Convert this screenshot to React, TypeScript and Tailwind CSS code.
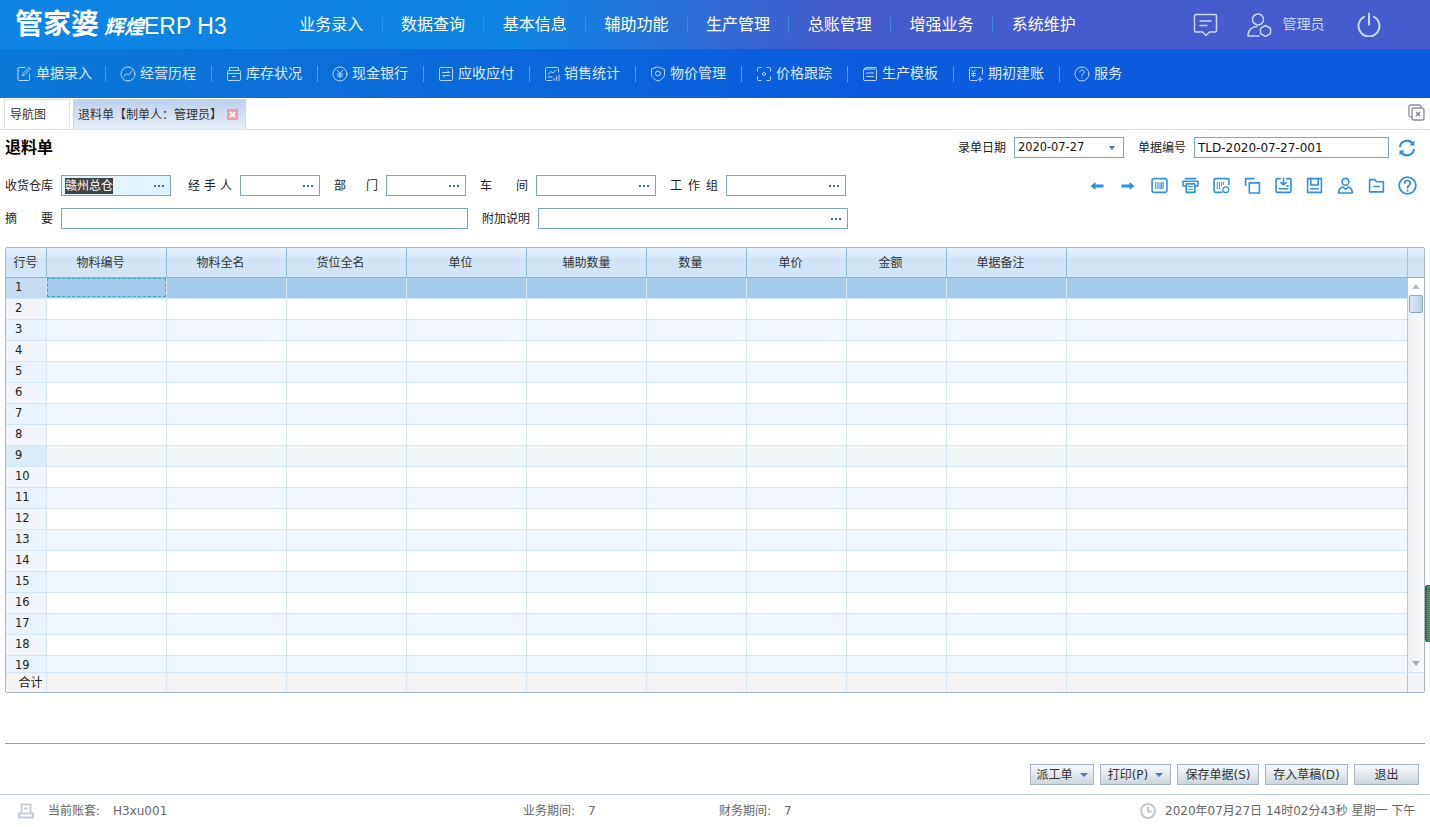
import type { ReactNode } from 'react';

const topMenus = ['业务录入', '数据查询', '基本信息', '辅助功能', '生产管理', '总账管理', '增强业务', '系统维护'];

function Ico({ size = 16, sw = 1, children }: { size?: number; sw?: number; children: ReactNode }) {
  return (
    <svg width={size} height={size} viewBox="0 0 16 16" fill="none" stroke="currentColor" strokeWidth={sw} strokeLinecap="round" strokeLinejoin="round" className="shrink-0">
      {children}
    </svg>
  );
}

const subMenus: { label: string; icon: ReactNode }[] = [
  { label: '单据录入', icon: <><path d="M9 1.5H3a1 1 0 0 0-1 1v11a1 1 0 0 0 1 1h9.5a1 1 0 0 0 1-1V8" /><path d="M6.5 9.5l.5-2 6-6 1.5 1.5-6 6z" /></> },
  { label: '经营历程', icon: <><circle cx="8" cy="8" r="7" /><path d="M4 10.5l2.5-3 2 1.5 3.5-4" /></> },
  { label: '库存状况', icon: <><rect x="1.5" y="4.5" width="13" height="10" rx="1" /><path d="M1.5 7.5h13M3.5 4.5v-3h9v3M6.5 10.5h3" /></> },
  { label: '现金银行', icon: <><circle cx="8" cy="8" r="7" /><path d="M5.5 4.5L8 7.5l2.500-3M8 7.500V12M5.500 8h5M5.500 10h5" /></> },
  { label: '应收应付', icon: <><rect x="1.500" y="1.500" width="13" height="13" rx="1" /><path d="M4.500 6.500h7L9.500 4.800M11.500 9.500h-7l2 1.700" /></> },
  { label: '销售统计', icon: <><path d="M14.500 6V2.500a1 1 0 0 0-1-1h-11a1 1 0 0 0-1 1v11a1 1 0 0 0 1 1h5" /><path d="M4 8.500l3-3 2 1.500 3-3M4 11h4M10 14.500v-2M12.500 14.500v-4M15 14.500V9" /></> },
  { label: '物价管理', icon: <><path d="M8 1l6.500 2.300V8c0 3.500-3 5.800-6.500 7-3.500-1.200-6.500-3.500-6.500-7V3.300z" /><circle cx="8" cy="7.500" r="2.500" /></> },
  { label: '价格跟踪', icon: <><path d="M5 1.500H2.500a1 1 0 0 0-1 1V5M11 1.500h2.500a1 1 0 0 1 1 1V5M5 14.500H2.500a1 1 0 0 1-1-1V11M11 14.500h2.500a1 1 0 0 0 1-1V11" /><circle cx="8" cy="8" r="1.500" /></> },
  { label: '生产模板', icon: <><rect x="1.500" y="3" width="13" height="11.500" rx="1" /><path d="M3.500 3V1.500h11M4.500 7h7M4.500 10.500h7" /></> },
  { label: '期初建账', icon: <><path d="M14.500 8V2.500a1 1 0 0 0-1-1h-11a1 1 0 0 0-1 1v11a1 1 0 0 0 1 1H9" /><path d="M3.500 4l2 2.500 2-2.500M5.500 6.500V11M3.500 7.500h4M3.500 9.500h4M12 11v4.500M10 13.200h4.500" /></> },
  { label: '服务', icon: <><circle cx="8" cy="8" r="7" /><path d="M5.800 6a2.200 2.200 0 1 1 3.400 1.900c-.8.500-1.200 1-1.200 1.900M8 11.800v.2" /></> },
];

const toolIcons: ReactNode[] = [
  <path key="a" d="M1.500 8L6.500 4v2.500h8v3h-8V12z" fill="currentColor" stroke="none" />,
  <path key="b" d="M14.500 8L9.500 4v2.500h-8v3h8V12z" fill="currentColor" stroke="none" />,
  <g key="c"><rect x="1" y="1.500" width="14" height="13" rx="2" /><path d="M4.500 5v6M6.500 5v6M8.500 5v6M10 5v6M11.500 5v6" strokeWidth="1" /></g>,
  <g key="d"><path d="M3 1.500h10M1 4h14v4.500h-3M4 8.500H1V4" /><path d="M4 6.500h8v8H4z" /><path d="M6 9h4M6 11.500h4" strokeWidth="1" /></g>,
  <g key="e"><path d="M15 7V3a1.500 1.500 0 0 0-1.500-1.500h-11A1.500 1.500 0 0 0 1 3v10a1.500 1.500 0 0 0 1.500 1.500H8" /><path d="M4 5v6M6 5v6M8 5v3M10 5v2" strokeWidth="1" /><circle cx="12" cy="12" r="2.800" strokeWidth="1.200" /></g>,
  <g key="f"><path d="M9.500 1.500h-8V8" /><rect x="5" y="5.500" width="9.500" height="9.500" /></g>,
  <g key="g"><path d="M5 1.500H2a1 1 0 0 0-1 1v11a1 1 0 0 0 1 1h12a1 1 0 0 0 1-1v-11a1 1 0 0 0-1-1h-3" /><path d="M8 1v6M5.500 5L8 7.500 10.500 5M4 11h8M11 8.500h1.500" /></g>,
  <g key="h"><path d="M1.500 1.500h13v13h-13z" /><path d="M4.500 1.500v6h7v-6M4.500 11h7" /></g>,
  <g key="i"><circle cx="8" cy="4.500" r="3.200" /><path d="M1.500 15c.300-3.500 2-5 4-5.500L8 11.500l2.500-2c2 .5 3.700 2 4 5.500z" /></g>,
  <g key="j"><path d="M1.500 14V2.500h5l1.500 2h6.500V14zM5.500 9h5" /></g>,
  <g key="k"><circle cx="8" cy="8" r="7" /><path d="M5.700 6a2.300 2.300 0 1 1 3.500 2c-.8.500-1.200 1-1.200 2M8 12.300v.2" /></g>,
];

const columns = [
  { title: '物料编号', width: 'w-[120px]', shift: 'pr-[12px]' },
  { title: '物料全名', width: 'w-[120px]', shift: 'pr-[12px]' },
  { title: '货位全名', width: 'w-[120px]', shift: 'pr-[12px]' },
  { title: '单位', width: 'w-[120px]', shift: 'pr-[12px]' },
  { title: '辅助数量', width: 'w-[120px]', shift: '' },
  { title: '数量', width: 'w-[100px]', shift: 'pr-[12px]' },
  { title: '单价', width: 'w-[100px]', shift: 'pr-[12px]' },
  { title: '金额', width: 'w-[100px]', shift: 'pr-[12px]' },
  { title: '单据备注', width: 'w-[120px]', shift: 'pr-[12px]' },
];

function Dots() {
  return (
    <span className="ml-auto mr-[6px] flex gap-[2px]">
      <i className="h-[2px] w-[2px] bg-[#3a6db0]" />
      <i className="h-[2px] w-[2px] bg-[#3a6db0]" />
      <i className="h-[2px] w-[2px] bg-[#3a6db0]" />
    </span>
  );
}

function Field({ width, dots = true, children, className = '' }: { width: string; dots?: boolean; children?: ReactNode; className?: string }) {
  return (
    <div className={`flex h-[21px] shrink-0 items-center border border-[#7ba6bf] ${width} ${className}`}>
      {children}
      {dots && <Dots />}
    </div>
  );
}

// labels are stretched char by char, like 部   门
function Label({ text, width, className = '' }: { text: string; width: string; className?: string }) {
  return (
    <span className={`flex shrink-0 justify-between text-[12px] text-[#222] ${width} ${className}`}>
      {text.split('').map((ch, i) => (
        <span key={i}>{ch}</span>
      ))}
    </span>
  );
}

function Btn({ width, arrow, children }: { width: string; arrow?: boolean; children: ReactNode }) {
  return (
    <button className={`flex h-[21px] items-center justify-center gap-[7px] border border-[#a8b4c6] bg-[linear-gradient(180deg,#f8fafb,#ccd6dc)] text-[12px] text-[#333] ${width}`}>
      {children}
      {arrow && <i className="mt-[1px] h-0 w-0 border-x-[4px] border-t-[4px] border-x-transparent border-t-[#4a78b8]" />}
    </button>
  );
}

function Row({ n }: { n: number }) {
  const selected = n === 1;
  const odd = n % 2 === 1;
  const numBg = selected ? 'bg-[#c4dcf0]' : n === 9 ? 'bg-[#dcecf6]' : odd ? 'bg-[#ebf3fa]' : 'bg-[#f2f6fa]';
  const rowBg = selected ? 'bg-[#a3caea]' : n === 9 ? 'bg-[#f0f7f6]' : odd ? 'bg-[#f0f7fe]' : 'bg-white';
  const line = selected ? 'border-[#d5e7f6]' : 'border-[#d2e6f8]';
  return (
    <div className={`flex h-[21px] shrink-0 ${rowBg}`}>
      <div className={`flex w-[41px] shrink-0 items-center border-r border-b border-[#d2e6f8] pl-[9px] text-[11.5px] text-[#222] ${numBg}`}>{n}</div>
      {columns.map((c, i) => (
        <div key={c.title} className={`shrink-0 border-r border-b ${line} ${c.width}`}>
          {selected && i === 0 && <div className="h-[19px] w-[119px] border border-dashed border-[#3fa6c8]" />}
        </div>
      ))}
      <div className={`flex-1 border-b ${line}`} />
    </div>
  );
}

export default function App() {
  return (
    <div className="relative flex h-[827px] w-[1430px] flex-col overflow-hidden bg-white font-['DejaVu_Sans','Noto_Sans_CJK_SC',sans-serif]">
      {/* top menu */}
      <header className="flex h-[49px] shrink-0 items-center bg-[linear-gradient(90deg,#0d84e4_36%,#445cce_58%)] text-white">
        <div className="flex w-[281px] shrink-0 items-center pl-[15px]">
          <span className="text-[28px] leading-none font-bold">管家婆</span>
          <span className="mt-[4px] ml-[5px] text-[20px] leading-none font-bold italic">辉煌</span>
          <span className="mt-[3px] font-['Liberation_Sans'] text-[23px] leading-none">ERP H3</span>
        </div>
        <nav className="flex shrink-0">
          {topMenus.map((m, i) => (
            <a key={m} className={`flex h-[16px] w-[101.7px] items-center justify-center text-[16px] ${i < 7 ? 'border-r border-[#3d94e8]/80' : ''}`}>
              {m}
            </a>
          ))}
        </nav>
        <div className="ml-[98px] flex items-center text-[#c8d8f6]">
          <svg width="25" height="24" viewBox="0 0 25 24" fill="none" stroke="currentColor" strokeWidth="1.500" strokeLinejoin="round" strokeLinecap="round">
            <path d="M3 1.500h19a1.500 1.500 0 0 1 1.500 1.500v14.500a1.500 1.500 0 0 1-1.500 1.500h-5.500l-3.500 3.500-3.500-3.500H3a1.500 1.500 0 0 1-1.500-1.500V3A1.500 1.500 0 0 1 3 1.500z" />
            <path d="M7 8h11M7 12.500h7" />
          </svg>
          <svg className="ml-[29px]" width="25" height="24" viewBox="0 0 25 24" fill="none" stroke="currentColor" strokeWidth="1.500" strokeLinejoin="round" strokeLinecap="round">
            <circle cx="11" cy="6.500" r="5.500" />
            <path d="M1 23c0-6 4-9.500 9-9.500M1 23h11" />
            <path d="M18.500 12.500l5 2.800v5.400l-5 2.800-5-2.800v-5.400z" />
          </svg>
          <span className="ml-[11px] w-[42px] text-[14px] whitespace-nowrap">管理员</span>
          <svg className="ml-[32px]" width="24" height="25" viewBox="0 0 24 25" fill="none" stroke="currentColor" strokeWidth="2" strokeLinecap="round">
            <path d="M12 1.500v11" />
            <path d="M7 4.800a10.500 10.500 0 1 0 10 0" />
          </svg>
        </div>
      </header>

      {/* quick bar */}
      <div className="flex h-[49px] shrink-0 items-center bg-[linear-gradient(90deg,#0a7ad8,#0c5bdc_60%)] text-[14px] text-[#dce9fb]">
        {subMenus.map((s, i) => (
          <div key={s.label} className={`flex h-[16px] w-[106px] shrink-0 items-center gap-[4px] whitespace-nowrap ${i === 0 ? 'pl-[16px]' : 'pl-[14px]'} ${i < 10 ? 'border-r border-[#4f9be8]' : ''}`}>
            <span className="text-[#b9d4f6]">
              <Ico>{s.icon}</Ico>
            </span>
            {s.label}
          </div>
        ))}
      </div>

      {/* tabs */}
      <div className="flex h-[32px] shrink-0 items-end border-b border-[#e3e3e3] pl-[4px] text-[12px]">
        <div className="flex h-[30px] w-[66px] items-center border border-b-0 border-[#e0e0e0] pl-[5px] text-[#333]">导航图</div>
        <div className="ml-[3px] flex h-[30px] w-[173px] items-center border border-b-0 border-[#ced8e6] bg-[linear-gradient(180deg,#bcd0ec,#e8eef7)] pl-[4px] text-[#333]">
          <span className="whitespace-nowrap">退料单【制单人：管理员】</span>
          <span className="ml-[5px] flex h-[11px] w-[11px] items-center justify-center rounded-[1px] bg-[#ee9ea6]">
            <svg width="7" height="7" viewBox="0 0 7 7" stroke="#fff" strokeWidth="2"><path d="M1 1l5 5M6 1L1 6" /></svg>
          </span>
        </div>
        <svg className="mb-[8px] ml-auto mr-[5px] text-[#8a8f96]" width="17" height="17" viewBox="0 0 17 17" fill="none" stroke="currentColor" strokeWidth="1.300">
          <rect x="1" y="1" width="12" height="12" rx="2" />
          <rect x="4" y="4" width="12" height="12" rx="2" fill="#fff" />
          <path d="M8 8l4 4M12 8l-4 4" strokeWidth="1.600" />
        </svg>
      </div>

      {/* date and number */}
      <div className="flex shrink-0 items-center pt-[7px] pr-[14px] pl-[5px]">
        <h1 className="text-[16px] leading-[21px] font-bold text-black">退料单</h1>
        <Label text="录单日期" width="w-[48px]" className="ml-auto" />
        <Field width="w-[110px]" dots={false} className="ml-[8px]">
          <span className="pl-[3px] text-[11.400px] text-[#111]">2020-07-27</span>
          <i className="mr-[8px] ml-auto h-0 w-0 border-x-[3.500px] border-t-[4px] border-x-transparent border-t-[#3f78c0]" />
        </Field>
        <Label text="单据编号" width="w-[48px]" className="ml-[14px]" />
        <Field width="w-[195px]" dots={false} className="ml-[8px]">
          <span className="pl-[3px] text-[12px] text-[#111]">TLD-2020-07-27-001</span>
        </Field>
        <svg className="ml-[9px] text-[#2f93dc]" width="18" height="18" viewBox="0 0 18 18" fill="none" stroke="currentColor" strokeWidth="2.200">
          <path d="M2 8a7 7 0 0 1 12.500-3.500" />
          <path d="M16 10a7 7 0 0 1-12.500 3.500" />
          <path d="M16.500 1.500v5h-5z" fill="currentColor" stroke="none" />
          <path d="M1.500 16.500v-5h5z" fill="currentColor" stroke="none" />
        </svg>
      </div>

      {/* form row 1 */}
      <div className="mt-[17px] flex shrink-0 items-center pl-[5px]">
        <Label text="收货仓库" width="w-[48px]" />
        <Field width="w-[110px]" className="ml-[8px] bg-[#e0f5ff]">
          <span className="ml-[3px] bg-[#444] text-[12px] leading-[16px] text-white">赣州总仓</span>
        </Field>
        <Label text="经手人" width="w-[44px]" className="ml-[17px]" />
        <Field width="w-[80px]" className="ml-[8px]" />
        <Label text="部门" width="w-[44px]" className="ml-[14px]" />
        <Field width="w-[80px]" className="ml-[8px]" />
        <Label text="车间" width="w-[48px]" className="ml-[14px]" />
        <Field width="w-[120px]" className="ml-[8px]" />
        <Label text="工作组" width="w-[48px]" className="ml-[14px]" />
        <Field width="w-[120px]" className="ml-[8px]" />
        <div className="mr-[7.500px] ml-auto flex text-[#2f8fe0]">
          {toolIcons.map((icon, i) => (
            <span key={i} className="flex h-[18px] w-[31px] items-center justify-center">
              <Ico size={i < 2 ? 16 : i === 10 ? 19 : 17} sw={1.500}>{icon}</Ico>
            </span>
          ))}
        </div>
      </div>

      {/* form row 2 */}
      <div className="mt-[12px] flex shrink-0 items-center pl-[5px]">
        <Label text="摘要" width="w-[48px]" />
        <Field width="w-[407px]" dots={false} className="ml-[8px]" />
        <Label text="附加说明" width="w-[48px]" className="ml-[14px]" />
        <Field width="w-[310px]" className="ml-[8px]" />
      </div>

      {/* grid */}
      <div className="mx-[5px] mt-[18px] flex h-[446px] shrink-0 flex-col overflow-hidden rounded-[2px] border border-[#a5b8c8] text-[12px]">
        <div className="flex h-[30px] shrink-0 border-b border-[#8ab8d4] bg-[linear-gradient(180deg,#e6f2fe,#d8e9fa_30%,#cfe4f7_36%,#d2e6f8)] text-[#333]">
          <div className="flex w-[41px] shrink-0 items-center justify-center border-r border-[#8fbdd8] pr-[1px]">行号</div>
          {columns.map((c) => (
            <div key={c.title} className={`flex shrink-0 items-center justify-center border-r border-[#8fbdd8] ${c.width} ${c.shift}`}>
              {c.title}
            </div>
          ))}
          <div className="flex-1" />
          <div className="w-[17px] shrink-0 border-l border-[#a9c6dc]" />
        </div>
        <div className="flex min-h-0 flex-1">
          <div className="flex min-w-0 flex-1 flex-col overflow-hidden">
            {Array.from({ length: 19 }, (_, i) => (
              <Row key={i} n={i + 1} />
            ))}
          </div>
          <div className="flex w-[17px] shrink-0 flex-col border-l border-[#b8c8d8] bg-[linear-gradient(90deg,#eeeff1,#fbfbfc)]">
            <div className="flex h-[17px] items-center justify-center bg-white">
              <i className="h-0 w-0 border-x-[4px] border-b-[5px] border-x-transparent border-b-[#b5bcc6]" />
            </div>
            <div className="mx-[1px] h-[18px] rounded-[2px] border border-[#8fa9c8] bg-[linear-gradient(90deg,#dbe8f8,#b5d0ee)]" />
            <div className="mt-auto flex h-[17px] items-center justify-center">
              <i className="h-0 w-0 border-x-[4px] border-t-[5px] border-x-transparent border-t-[#a5adb8]" />
            </div>
          </div>
        </div>
        <div className="flex h-[20px] shrink-0 border-t border-[#d2e6f8] bg-[#f5f3f1] text-[#222]">
          <div className="flex w-[41px] shrink-0 items-center justify-center border-r border-[#d2e6f8] pl-[9px]">合计</div>
          {columns.map((c) => (
            <div key={c.title} className={`shrink-0 border-r border-[#d2e6f8] ${c.width}`} />
          ))}
          <div className="flex-1" />
          <div className="w-[17px] shrink-0 border-l border-[#b8c8d8] bg-[#f2f4f8]" />
        </div>
      </div>

      <div className="mx-[5px] mt-[50px] h-px shrink-0 bg-[#7ba6bb]" />

      {/* buttons */}
      <div className="mt-[20px] flex shrink-0 justify-end gap-[6px] pr-[11px]">
        <Btn width="w-[64px]" arrow>派工单</Btn>
        <Btn width="w-[71px]" arrow>打印(P)</Btn>
        <Btn width="w-[82px]">保存单据(S)</Btn>
        <Btn width="w-[83px]">存入草稿(D)</Btn>
        <Btn width="w-[65px]">退出</Btn>
      </div>

      {/* status bar */}
      <footer className="mt-[9px] flex h-[33px] shrink-0 items-center border-t border-[#bcc6cf] pl-[18px] text-[12px] whitespace-nowrap text-[#666]">
        <svg width="16" height="16" viewBox="0 0 16 16" fill="none" stroke="#c5ccd6" strokeWidth="2">
          <path d="M3.500 10V1.500h9V10M1 14.500h14v-4H1zM6 5.500h4" />
        </svg>
        <span className="ml-[14px] w-[65px]">当前账套:</span>
        <span className="w-[410px]">H3xu001</span>
        <span className="w-[65px]">业务期间:</span>
        <span className="w-[131px]">7</span>
        <span className="w-[65px]">财务期间:</span>
        <span className="w-[356px]">7</span>
        <svg className="text-[#c5c9ce]" width="16" height="16" viewBox="0 0 16 16" fill="none" stroke="currentColor" strokeWidth="2">
          <circle cx="8" cy="8" r="7" />
          <path d="M8 4v4.500h3.500" />
        </svg>
        <span className="ml-[9px]">2020年07月27日 14时02分43秒 星期一 下午</span>
      </footer>

      {/* floating handle on the window edge */}
      <div className="absolute top-[585px] right-0 h-[57px] w-[5px] rounded-l-[3px] bg-[repeating-linear-gradient(180deg,#5a6a5e_0,#5a6a5e_1px,#4aa860_1px,#4aa860_2px)] shadow-[inset_2px_0_0_#555]" />
    </div>
  );
}
